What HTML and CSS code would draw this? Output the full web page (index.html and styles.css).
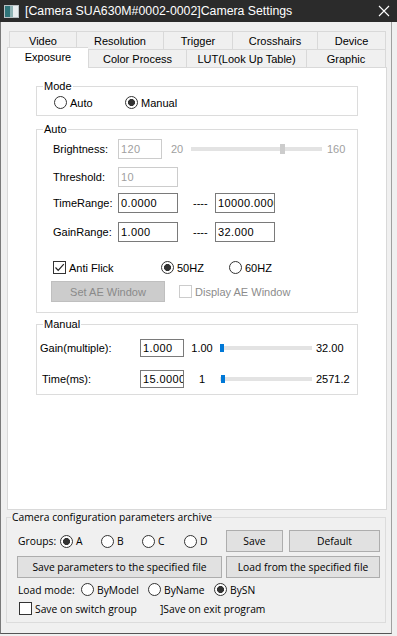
FILE: index.html
```html
<!DOCTYPE html>
<html lang="en">
<head>
    <meta charset="UTF-8">
    <title>Camera Settings</title>
    <link rel="stylesheet" href="styles.css">
</head>
<body>
    <div class="titlebar">
        <svg class="app-icon" width="15" height="13" viewBox="0 0 15 13">
            <rect x="0.5" y="0.5" width="14" height="12" fill="#e9eef0" stroke="#b9c0c4"/>
            <rect x="1" y="1" width="5" height="11" fill="#2f7479"/>
            <rect x="6" y="1" width="3" height="11" fill="#8fb3b5"/>
        </svg>
        <span class="title">[Camera SUA630M#0002-0002]Camera Settings</span>
        <svg class="close" width="12" height="12" viewBox="0 0 12 12">
            <path d="M1 1 L11 11 M11 1 L1 11" stroke="#fff" stroke-width="1.1"/>
        </svg>
    </div>

    <div class="client">
        <div class="tabs">
            <div class="tab-row">
                <div class="tab t-video">Video</div>
                <div class="tab t-res">Resolution</div>
                <div class="tab t-trig">Trigger</div>
                <div class="tab t-cross">Crosshairs</div>
                <div class="tab t-dev">Device</div>
            </div>
            <div class="tab-row">
                <div class="tab t-exp active">Exposure</div>
                <div class="tab t-color">Color Process</div>
                <div class="tab t-lut">LUT(Look Up Table)</div>
                <div class="tab t-graph">Graphic</div>
            </div>
        </div>

        <div class="panel">
            <!-- Mode -->
            <div class="group mode-group">
                <span class="group-label">Mode</span>
                <div class="line">
                    <label class="radio w71"><span class="circle"></span>Auto</label>
                    <label class="radio"><span class="circle on"></span>Manual</label>
                </div>
            </div>

            <!-- Auto -->
            <div class="group auto-group">
                <span class="group-label">Auto</span>
                <div class="arow r1">
                    <span class="lbl">Brightness:</span>
                    <div class="field off w44">120</div>
                    <span class="rng-min dim">20</span>
                    <div class="slider w131">
                        <div class="track"></div>
                        <div class="thumb off" style="left: 89px"></div>
                    </div>
                    <span class="rng-max dim">160</span>
                </div>
                <div class="arow r2">
                    <span class="lbl">Threshold:</span>
                    <div class="field off w60">10</div>
                </div>
                <div class="arow r3">
                    <span class="lbl">TimeRange:</span>
                    <div class="field w60">0.0000</div>
                    <span class="dash">----</span>
                    <div class="field w60">10000.0000</div>
                </div>
                <div class="arow r4">
                    <span class="lbl">GainRange:</span>
                    <div class="field w60">1.000</div>
                    <span class="dash">----</span>
                    <div class="field w60">32.000</div>
                </div>
                <div class="arow r5">
                    <label class="check w108">
                        <span class="box">
                            <svg width="11" height="11" viewBox="0 0 11 11"><path d="M1.5 5.5 L4.2 8.3 L9.8 2.2" fill="none" stroke="#222" stroke-width="1.2"/></svg>
                        </span>Anti Flick
                    </label>
                    <label class="radio w68"><span class="circle on"></span>50HZ</label>
                    <label class="radio"><span class="circle"></span>60HZ</label>
                </div>
                <div class="arow r6">
                    <div class="btn disabled set-ae">Set AE Window</div>
                    <label class="check dim ae-check"><span class="box off"></span>Display AE Window</label>
                </div>
            </div>

            <!-- Manual -->
            <div class="group manual-group">
                <span class="group-label">Manual</span>
                <div class="mrow m1">
                    <span class="mlbl">Gain(multiple):</span>
                    <div class="field small w44">1.000</div>
                    <span class="mval">1.00</span>
                    <div class="slider w92">
                        <div class="track"></div>
                        <div class="thumb" style="left: 0px"></div>
                    </div>
                    <span class="mmax">32.00</span>
                </div>
                <div class="mrow m2">
                    <span class="mlbl lbl-time">Time(ms):</span>
                    <div class="field small w44">15.0000</div>
                    <span class="mval">1</span>
                    <div class="slider w92">
                        <div class="track"></div>
                        <div class="thumb" style="left: 1px"></div>
                    </div>
                    <span class="mmax">2571.2</span>
                </div>
            </div>
        </div>

        <!-- archive -->
        <div class="archive">
            <span class="archive-label">Camera configuration parameters archive</span>
            <div class="brow b1">
                <span class="blbl w42">Groups:</span>
                <label class="radio w41"><span class="circle on"></span>A</label>
                <label class="radio w41"><span class="circle"></span>B</label>
                <label class="radio w42"><span class="circle"></span>C</label>
                <label class="radio w42"><span class="circle"></span>D</label>
                <div class="btn w57">Save</div>
                <div class="btn w91 ml6">Default</div>
            </div>
            <div class="brow b2">
                <div class="btn w205 save-file">Save parameters to the specified file</div>
                <div class="btn w154 ml4">Load from the specified file</div>
            </div>
            <div class="brow b3">
                <span class="blbl w63">Load mode:</span>
                <label class="radio w67"><span class="circle"></span>ByModel</label>
                <label class="radio w66"><span class="circle"></span>ByName</label>
                <label class="radio"><span class="circle on"></span>BySN</label>
            </div>
            <div class="brow b4">
                <label class="check w141 switch-check"><span class="box"></span>Save on switch group</label>
                <span class="exit-check">]Save on exit program</span>
            </div>
        </div>
    </div>
</body>
</html>
```

FILE: styles.css
```css
body {
    margin: 0;
    background-color: #f0f0f0;
    font-family: "Liberation Sans", Arial, sans-serif;
    font-size: 11px;
    color: #000;
}

/* title bar */

.titlebar {
    height: 22px;
    background-color: #2b2b2b;
    color: #fff;
    display: flex;
    align-items: center;
}

.app-icon {
    margin-left: 4px;
}

.title {
    margin-left: 6px;
    font-size: 12.3px;
}

.close {
    margin-left: auto;
    margin-right: 7px;
}

.client {
    width: 390px;
    height: 611px;
    border-left: 1px solid #7a7a7a;
    border-right: 1px solid #a0a0a0;
    border-bottom: 1px solid #555;
}

/* tabs */

.tabs {
    padding: 9px 0 0 8px;
}

.tab-row {
    display: flex;
    height: 18px;
}

.tab {
    box-sizing: border-box;
    height: 18px;
    border: 1px solid #d9d9d9;
    border-right: none;
    border-bottom: none;
    background-color: #f0f0f0;
    display: flex;
    align-items: center;
    justify-content: center;
}

.tab:last-child {
    border-right: 1px solid #d9d9d9;
}

.tab.active {
    position: relative;
    z-index: 1;
    height: 21px;
    margin: -2px 0 -1px -2px;
    width: 81px !important;
    background-color: #fff;
    padding-bottom: 2px;
}

.t-video { width: 67px; }
.t-res { width: 87px; }
.t-trig { width: 69px; }
.t-cross { width: 85px; }
.t-dev { width: 69px; }
.t-exp { width: 79px; }
.t-color { width: 98px; }
.t-lut { width: 120px; }
.t-graph { width: 80px; }

/* page */

.panel {
    box-sizing: border-box;
    margin-left: 6px;
    width: 380px;
    height: 443px;
    border: 1px solid #d9d9d9;
    background-color: #fff;
    padding-top: 18px;
}

.group {
    box-sizing: border-box;
    position: relative;
    margin-left: 28px;
    width: 322px;
    border: 1px solid #dcdcdc;
}

.group-label {
    position: absolute;
    top: -7px;
    left: 6px;
    padding: 0 1px;
    line-height: 13px;
    background-color: #fff;
}

.mode-group {
    height: 30px;
    padding: 9px 0 0 17px;
}

.line {
    display: flex;
    height: 13px;
}

.auto-group {
    margin-top: 13px;
    height: 184px;
}

.manual-group {
    margin-top: 11px;
    height: 71px;
}

.dim {
    color: #a0a0a0;
}

/* radios / checks */

.radio, .check {
    display: flex;
    align-items: center;
    white-space: nowrap;
}

.circle {
    box-sizing: border-box;
    width: 13px;
    height: 13px;
    border: 1px solid #333;
    border-radius: 50%;
    background-color: #fff;
    margin-right: 3px;
    flex: none;
}

.circle.on {
    background: radial-gradient(circle, #333 0 3.2px, #fff 3.8px);
}

.box {
    box-sizing: border-box;
    width: 13px;
    height: 13px;
    border: 1px solid #333;
    background-color: #fff;
    margin-right: 3px;
    display: flex;
    align-items: center;
    justify-content: center;
    flex: none;
}

.box.off {
    border-color: #cccccc;
}

.w41 { width: 41px; }
.w42 { width: 42px; }
.w44 { width: 44px; }
.w57 { width: 57px; }
.w60 { width: 60px; }
.w63 { width: 63px; }
.w66 { width: 66px; }
.w67 { width: 67px; }
.w68 { width: 68px; }
.w71 { width: 71px; }
.w91 { width: 91px; }
.w92 { width: 92px; }
.w108 { width: 108px; }
.w131 { width: 131px; }
.w141 { width: 141px; }
.w154 { width: 154px; }
.w205 { width: 205px; }
.ml4 { margin-left: 4px; }
.ml6 { margin-left: 6px; }

/* auto rows */

.arow {
    display: flex;
    align-items: center;
    padding-left: 16px;
    height: 20px;
}

.r1 { margin-top: 9px; }
.r2 { margin-top: 8px; }
.r3 { margin-top: 6px; }
.r4 { margin-top: 9px; }
.r5 { margin-top: 19px; height: 13px; }
.r6 { margin-top: 7px; height: 21px; }

.lbl {
    width: 65px;
}

.field {
    box-sizing: border-box;
    height: 20px;
    border: 1px solid #7a7a7a;
    background-color: #fff;
    padding-left: 2px;
    line-height: 18px;
    letter-spacing: 0.4px;
    white-space: nowrap;
    overflow: hidden;
    flex: none;
}

.field.off {
    border-color: #cccccc;
    color: #a0a0a0;
}

.field.small {
    height: 18px;
    line-height: 16px;
}

.rng-min {
    margin-left: 9px;
    width: 20px;
}

.rng-max {
    margin-left: 5px;
}

.dash {
    margin-left: 15px;
    width: 22px;
}

.slider {
    position: relative;
    height: 10px;
    flex: none;
}

.track {
    margin-top: 3px;
    height: 4px;
    background-color: #e3e3e3;
}

.thumb {
    position: absolute;
    top: 1px;
    width: 4px;
    height: 8px;
    background-color: #0078d7;
}

.thumb.off {
    top: 0;
    width: 5px;
    height: 10px;
    background-color: #cccccc;
}

.btn {
    box-sizing: border-box;
    height: 22px;
    border: 1px solid #adadad;
    background-color: #e1e1e1;
    display: flex;
    align-items: center;
    justify-content: center;
    white-space: nowrap;
    flex: none;
}

.btn.disabled {
    background-color: #cccccc;
    border-color: #bfbfbf;
    color: #8a8a8a;
}

.set-ae {
    margin-left: -2px;
    width: 114px;
    height: 21px;
}

.ae-check {
    margin-left: 14px;
    color: #8c8c8c;
}

/* manual rows */

.mrow {
    display: flex;
    align-items: center;
    height: 18px;
    padding-left: 3px;
}

.m1 { margin-top: 14px; }
.m2 { margin-top: 13px; }

.mlbl {
    width: 100px;
}

.lbl-time {
    box-sizing: border-box;
    padding-left: 2px;
}

.mval {
    width: 36px;
    text-align: center;
}

.mmax {
    margin-left: 4px;
}

/* archive */

.archive {
    box-sizing: border-box;
    position: relative;
    margin: 7px 0 0 5px;
    width: 380px;
    height: 106px;
    border: 1px solid #dcdcdc;
    padding-left: 11px;
    font-family: "Open Sans", sans-serif;
    font-size: 10.3px;
}

.archive-label {
    position: absolute;
    top: -8px;
    left: 4px;
    padding: 0 1px;
    line-height: 14px;
    background-color: #f0f0f0;
}

.brow {
    display: flex;
    align-items: center;
}

.blbl {
    flex: none;
}

.b1 { margin-top: 12px; height: 22px; }
.b2 { margin-top: 4px; height: 22px; }
.b3 { margin-top: 5px; height: 13px; }
.b4 { margin-top: 6px; height: 13px; }

.save-file {
    margin-left: -1px;
}

.switch-check {
    margin-left: 1px;
}
```
